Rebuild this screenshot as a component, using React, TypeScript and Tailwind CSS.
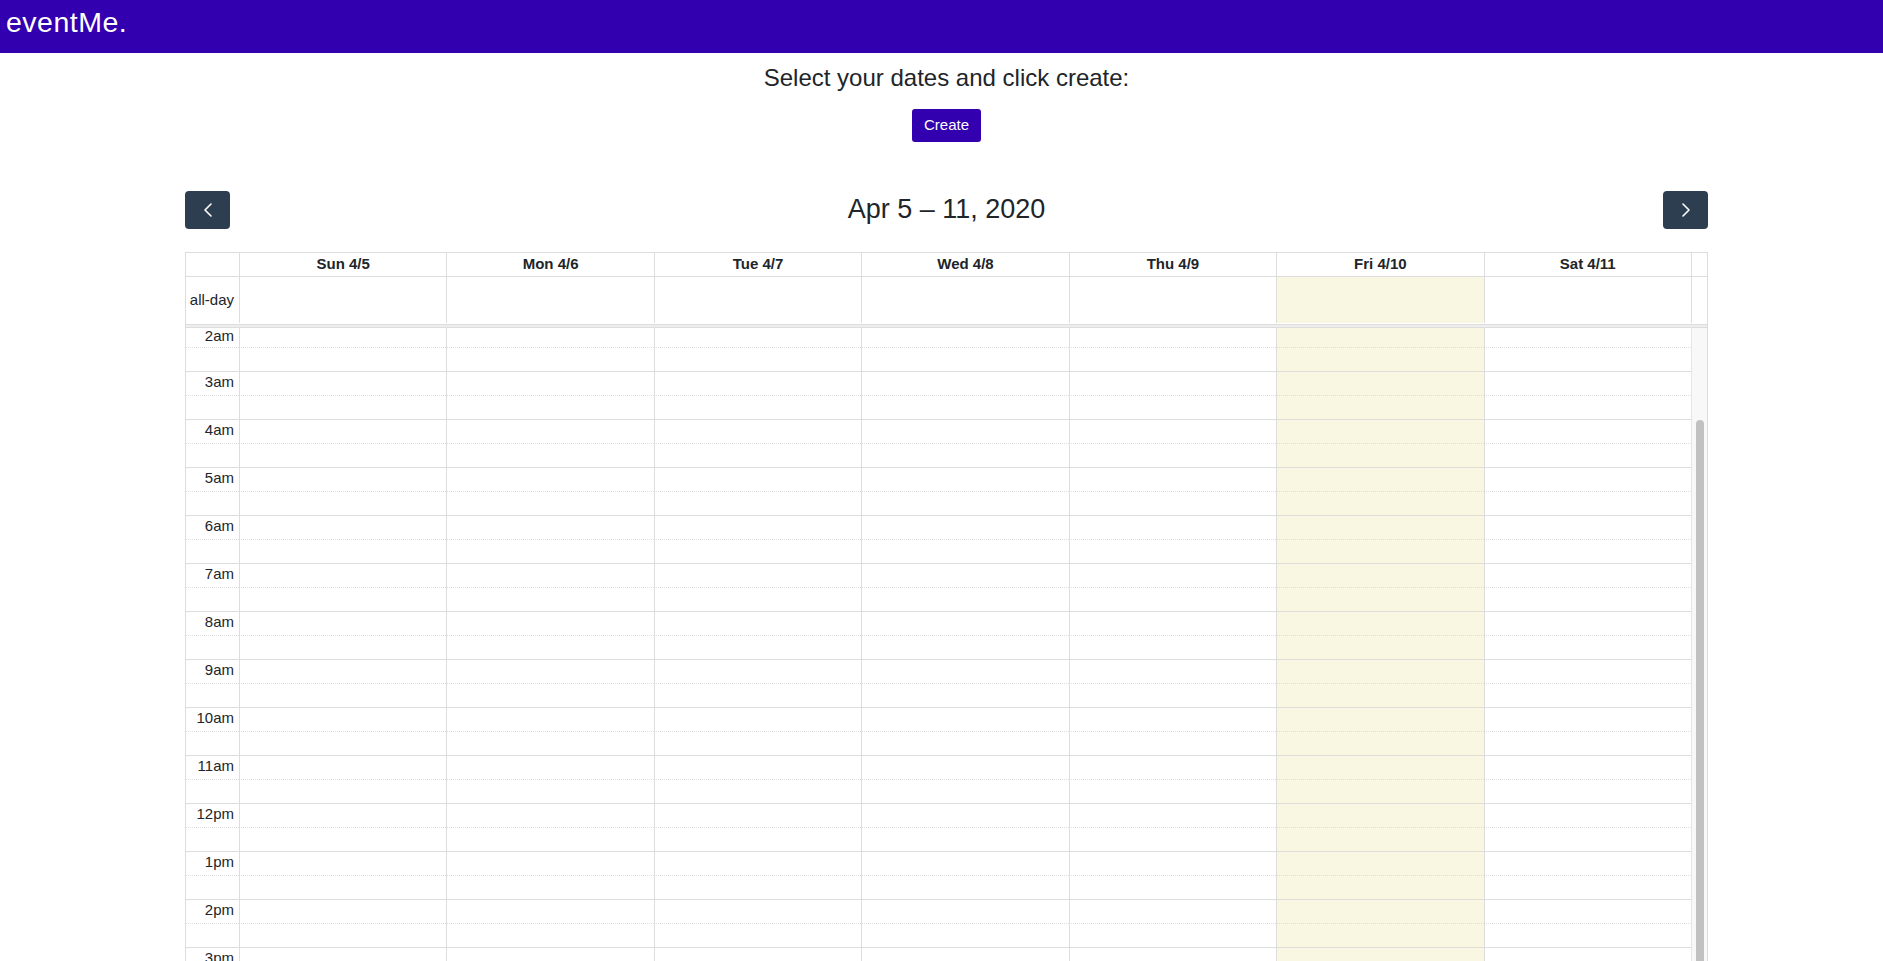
const days = ['Sun 4/5', 'Mon 4/6', 'Tue 4/7', 'Wed 4/8', 'Thu 4/9', 'Fri 4/10', 'Sat 4/11'];
const TODAY = 5;
const hours = ['2am', '3am', '4am', '5am', '6am', '7am', '8am', '9am', '10am', '11am', '12pm', '1pm', '2pm', '3pm'];

function Chevron({ dir }: { dir: 'left' | 'right' }) {
  return (
    <svg width="10" height="14" viewBox="0 0 10 14" fill="none">
      <polyline
        points={dir === 'left' ? '8,1 2,7 8,13' : '2,1 8,7 2,13'}
        stroke="white"
        strokeWidth="1.6"
        strokeLinecap="round"
        strokeLinejoin="round"
      />
    </svg>
  );
}

// first row is partly scrolled out of view, so it's shorter and has no top line
function SlotRow({ label, minor, first }: { label?: string; minor?: boolean; first?: boolean }) {
  const line = first
    ? ''
    : minor
      ? 'border-t border-[#ddd] [border-top-style:dotted]'
      : 'border-t border-[#ddd]';
  return (
    <div className={`grid grid-cols-[53px_repeat(7,minmax(0,1fr))] ${first ? 'h-[19px]' : 'h-[24px]'}`}>
      <div
        className={`${line} flex items-center justify-end pr-[5px] ${first ? 'pb-[10px]' : 'pb-[4px]'} text-[15px] leading-none`}
      >
        {label}
      </div>
      {days.map((d, i) => (
        <div
          key={d}
          className={`${line} border-l border-l-[#ddd] [border-left-style:solid] ${i === TODAY ? 'bg-[#f9f7e1]' : ''}`}
        />
      ))}
    </div>
  );
}

export default function App() {
  return (
    <div className="h-screen overflow-hidden bg-white text-[#212529] font-['Liberation_Sans',Arial,sans-serif]">
      {/* Top bar */}
      <header className="h-[53px] bg-[#3300b0] pl-[6px] pt-[8px]">
        <span className="text-white text-[28.5px] leading-none tracking-[0.5px]">eventMe.</span>
      </header>

      <main className="pl-[185px] pr-[175px]">
        <div className="flex flex-col items-center">
          <h1 className="mt-[11px] text-[24px] leading-[28px]">Select your dates and click create:</h1>
          <button className="mt-[17px] h-[33px] w-[69px] rounded-[3px] bg-[#3300b0] text-white text-[15px]">
            Create
          </button>
        </div>

        {/* Toolbar */}
        <div className="mt-[49px] mb-[23px] flex items-center justify-between">
          <button className="w-[45px] h-[38px] rounded-[4px] bg-[#2c3e50] flex items-center justify-center">
            <Chevron dir="left" />
          </button>
          <h2 className="text-[27px] leading-[32px] -mt-[2px]">Apr 5 – 11, 2020</h2>
          <button className="w-[45px] h-[38px] rounded-[4px] bg-[#2c3e50] flex items-center justify-center">
            <Chevron dir="right" />
          </button>
        </div>

        {/* Week grid */}
        <div className="border-x border-t border-[#ddd] text-[15px]">
          <div className="grid grid-cols-[53px_repeat(7,minmax(0,1fr))_16px] border-b border-[#ddd]">
            <div className="h-[23px]" />
            {days.map((d) => (
              <div key={d} className="h-[23px] border-l border-[#ddd] flex items-center justify-center font-bold">
                {d}
              </div>
            ))}
            <div className="border-l border-[#ddd]" />
          </div>

          <div className="grid grid-cols-[53px_repeat(7,minmax(0,1fr))_16px]">
            <div className="h-[46px] flex items-center justify-end pr-[5px]">all-day</div>
            {days.map((d, i) => (
              <div key={d} className={`h-[46px] border-l border-[#ddd] ${i === TODAY ? 'bg-[#f9f7e1]' : ''}`} />
            ))}
            <div className="border-l border-[#ddd]" />
          </div>
          <div className="h-px" />
          <div className="h-[4px] border-y border-[#ddd] bg-[#eee]" />

          <div className="flex">
            <div className="flex-1">
              {hours.map((h, i) => (
                <div key={h}>
                  <SlotRow label={h} first={i === 0} />
                  <SlotRow minor />
                </div>
              ))}
            </div>
            <div className="w-[16px] border-l border-[#e6e6e6] bg-[#f8f8f8] pl-[4px]">
              <div className="mt-[92px] w-[8px] h-[800px] rounded-full bg-[#c1c1c1]" />
            </div>
          </div>
        </div>
      </main>
    </div>
  );
}
